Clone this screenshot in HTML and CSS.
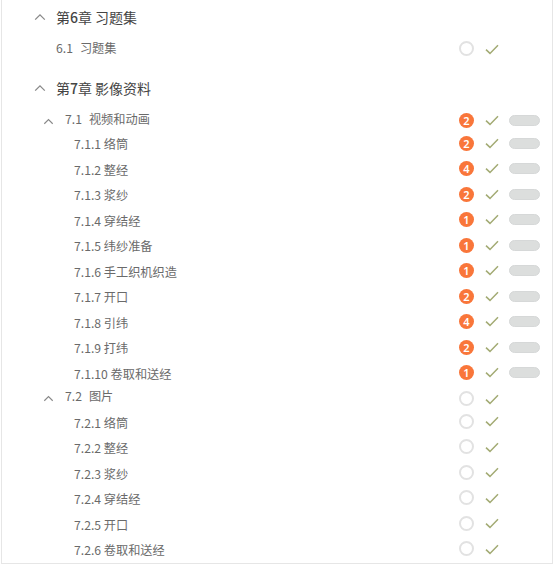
FILE: index.html
```html
<!DOCTYPE html>
<html lang="zh">
<head>
<meta charset="utf-8">
<title>目录</title>
<link rel="stylesheet" href="styles.css">
</head>
<body>
<svg class="defs" width="0" height="0" aria-hidden="true">
  <symbol id="caret" viewBox="0 0 12 8"><path d="M1.2 6.6 6 1.8l4.8 4.8" fill="none" stroke="currentColor" stroke-width="1.3"/></symbol>
  <symbol id="check" viewBox="0 0 14 11"><path d="M1 5.6 5 9.4 13 1.2" fill="none" stroke="currentColor" stroke-width="1.5"/></symbol>
</svg>
<main class="panel">
  <section class="chapter ch6">
    <h2 class="chapter-title"><svg class="caret"><use href="#caret"/></svg><span>第<b>6</b>章 习题集</span></h2>
    <div class="row section-lone"><span class="label"><span class="num">6.1</span>习题集</span><i class="ring"></i><svg class="check"><use href="#check"/></svg></div>
  </section>
  <section class="chapter ch7">
    <h2 class="chapter-title"><svg class="caret"><use href="#caret"/></svg><span>第<b>7</b>章 影像资料</span></h2>
    <div class="row section first"><svg class="caret small"><use href="#caret"/></svg><span class="label"><span class="num">7.1</span>视频和动画</span><i class="badge">2</i><svg class="check"><use href="#check"/></svg><i class="pill"></i></div>
    <div class="row item"><span class="label">7.1.1 络筒</span><i class="badge">2</i><svg class="check"><use href="#check"/></svg><i class="pill"></i></div>
    <div class="row item"><span class="label">7.1.2 整经</span><i class="badge">4</i><svg class="check"><use href="#check"/></svg><i class="pill"></i></div>
    <div class="row item"><span class="label">7.1.3 浆纱</span><i class="badge">2</i><svg class="check"><use href="#check"/></svg><i class="pill"></i></div>
    <div class="row item"><span class="label">7.1.4 穿结经</span><i class="badge">1</i><svg class="check"><use href="#check"/></svg><i class="pill"></i></div>
    <div class="row item"><span class="label">7.1.5 纬纱准备</span><i class="badge">1</i><svg class="check"><use href="#check"/></svg><i class="pill"></i></div>
    <div class="row item"><span class="label">7.1.6 手工织机织造</span><i class="badge">1</i><svg class="check"><use href="#check"/></svg><i class="pill"></i></div>
    <div class="row item"><span class="label">7.1.7 开口</span><i class="badge">2</i><svg class="check"><use href="#check"/></svg><i class="pill"></i></div>
    <div class="row item"><span class="label">7.1.8 引纬</span><i class="badge">4</i><svg class="check"><use href="#check"/></svg><i class="pill"></i></div>
    <div class="row item"><span class="label">7.1.9 打纬</span><i class="badge">2</i><svg class="check"><use href="#check"/></svg><i class="pill"></i></div>
    <div class="row item"><span class="label">7.1.10 卷取和送经</span><i class="badge">1</i><svg class="check"><use href="#check"/></svg><i class="pill"></i></div>
    <div class="row section second"><svg class="caret small"><use href="#caret"/></svg><span class="label"><span class="num">7.2</span>图片</span><i class="ring"></i><svg class="check"><use href="#check"/></svg></div>
    <div class="row item"><span class="label">7.2.1 络筒</span><i class="ring"></i><svg class="check"><use href="#check"/></svg></div>
    <div class="row item"><span class="label">7.2.2 整经</span><i class="ring"></i><svg class="check"><use href="#check"/></svg></div>
    <div class="row item"><span class="label">7.2.3 浆纱</span><i class="ring"></i><svg class="check"><use href="#check"/></svg></div>
    <div class="row item"><span class="label">7.2.4 穿结经</span><i class="ring"></i><svg class="check"><use href="#check"/></svg></div>
    <div class="row item"><span class="label">7.2.5 开口</span><i class="ring"></i><svg class="check"><use href="#check"/></svg></div>
    <div class="row item"><span class="label">7.2.6 卷取和送经</span><i class="ring"></i><svg class="check"><use href="#check"/></svg></div>
  </section>
</main>
</body>
</html>
```
FILE: styles.css
```css
* { box-sizing: border-box; }
html, body { margin: 0; padding: 0; height: 100%; background: #fff; overflow: hidden; }
body { font-family: "Noto Sans CJK SC", "Noto Sans", sans-serif; color: #666; }
.defs { display: block; height: 0; }
.panel {
  width: 552px;
  height: 564px;
  margin-left: 1px;
  border: 1px solid #e6e6e6;
  border-top: 0;
  padding-top: 4px;
  overflow: hidden;
}
.chapter-title {
  display: flex;
  align-items: center;
  margin: 0 0 1px;
  height: 26px;
  padding-left: 32px;
  font-size: 14px;
  font-weight: 400;
  color: #444;
}
.chapter-title b { font-weight: 500; }
.caret { width: 12px; height: 8px; color: #888; margin-right: 10px; flex: none; }
.caret.small { width: 11px; height: 7px; margin-right: 11px; margin-top: 3px; }
.row {
  display: flex;
  align-items: center;
  height: 25.5px;
  padding-right: 12px;
  font-size: 12.2px;
  color: #6a6a6a;
}
.label { flex: 1; white-space: nowrap; }
.item .label { margin-top: 2px; }
.num { display: inline-block; margin-right: 7px; }
.section-lone { padding-left: 54px; height: 34px; margin-bottom: 10px; }
.section-lone .ring { margin-top: 1px; }
.section-lone .check { margin-top: 2px; }
.ch7 .chapter-title { margin-bottom: 9px; }
.section { padding-left: 41px; height: 23.5px; }
.section.first { height: 20.5px; }
.section .label { margin-top: -3px; }
.section.second .ring { margin-top: 3px; }
.section.second .check { margin-top: 4px; }
.item { padding-left: 72px; }
.ring, .badge {
  flex: none;
  width: 15px;
  height: 15px;
  border-radius: 50%;
  font-style: normal;
  margin-right: 11px;
}
.ring { border: 2px solid #e2e2e2; margin-top: -1px; }
.badge {
  background: #f9763a;
  color: #fff;
  font-family: "Noto Sans", sans-serif;
  font-size: 11px;
  font-weight: 600;
  line-height: 15px;
  text-align: center;
}
.check { flex: none; width: 14px; height: 11px; color: #a3ab74; margin-right: 10px; }
.pill {
  flex: none;
  width: 31px;
  height: 11px;
  border-radius: 6px;
  background: #dcdedd;
  border: 1px solid #d6d8d8;
}
.row .check:last-child { margin-right: 41px; }
```
